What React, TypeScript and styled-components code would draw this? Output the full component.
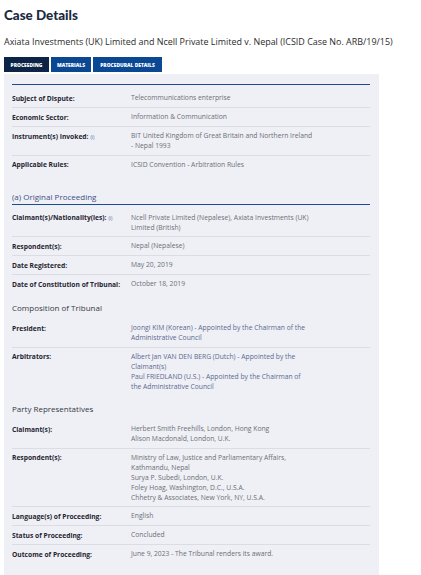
import React from "react";
import styled, { createGlobalStyle } from "styled-components";

const Global = createGlobalStyle`
  html, body { margin: 0; padding: 0; background: #ffffff; }
  body { font-family: "Open Sans", "Noto Sans", sans-serif; }
`;

const Page = styled.div`
  width: 421px;
  padding: 7px 0 0 4px;
  box-sizing: border-box;
`;

const Title = styled.h1`
  margin: 0;
  font-family: "Lato", "Open Sans", sans-serif;
  font-weight: 900;
  font-size: 13.4px;
  line-height: 16px;
  color: #1b2a3f;
`;

const Subtitle = styled.div`
  margin-top: 13px;
  font-size: 8.95px;
  line-height: 12px;
  color: #2b2b2b;
  white-space: nowrap;
`;

const Tabs = styled.div`
  display: flex;
  gap: 2px;
  margin-top: 9px;
`;

const Tab = styled.div<{ $active?: boolean; $w: number }>`
  width: ${(p) => p.$w}px;
  height: 15px;
  display: flex;
  align-items: center;
  justify-content: center;
  background: ${(p) => (p.$active ? "#0c2546" : "#0b4893")};
  color: #ffffff;
  font-size: 4.9px;
  font-weight: 800;
  text-transform: uppercase;
  white-space: nowrap;
`;

const Panel = styled.div`
  margin-top: 2px;
  width: 375px;
  background: #eff0f5;
  padding: 10px 9px 13px 8px;
  box-sizing: border-box;
`;

const Rule = styled.div`
  border-top: 1px solid #1d4b8f;
  margin-bottom: 4px;
`;

const SectionTitle = styled.div<{ $blue?: boolean; $top: number }>`
  margin-top: ${(p) => p.$top}px;
  font-size: 8px;
  line-height: 11px;
  color: ${(p) => (p.$blue ? "#3d4f84" : "#333a45")};
  padding-bottom: ${(p) => (p.$blue ? 2 : 0)}px;
`;

const Table = styled.div<{ $gap?: number }>`
  margin-top: ${(p) => p.$gap ?? 0}px;
`;

const Row = styled.div<{ $last?: boolean }>`
  display: grid;
  grid-template-columns: 119px 1fr;
  padding: 3.5px 0;
  border-bottom: ${(p) => (p.$last ? "none" : "1px solid #dcdde4")};
`;

const Label = styled.div`
  font-size: 6.7px;
  line-height: 11px;
  font-weight: 700;
  color: #1f2530;
  white-space: nowrap;
`;

const Info = styled.span`
  font-size: 4.5px;
  font-weight: 400;
  color: #3b5a9a;
  margin-left: 2px;
`;

const Value = styled.div<{ $link?: boolean }>`
  font-size: 6.75px;
  line-height: 10px;
  padding-top: 0.5px;
  color: ${(p) => (p.$link ? "#5b6890" : "#6c6e76")};
`;

const Line = styled.div`
  white-space: nowrap;
`;

type RowData = { label: string; info?: boolean; lines: string[]; link?: boolean };

const group1: RowData[] = [
  { label: "Subject of Dispute:", lines: ["Telecommunications enterprise"] },
  { label: "Economic Sector:", lines: ["Information & Communication"] },
  {
    label: "Instrument(s) Invoked:",
    info: true,
    lines: ["BIT United Kingdom of Great Britain and Northern Ireland", "- Nepal 1993"],
  },
  { label: "Applicable Rules:", lines: ["ICSID Convention - Arbitration Rules"] },
];

const group2: RowData[] = [
  {
    label: "Claimant(s)/Nationality(ies):",
    info: true,
    lines: ["Ncell Private Limited (Nepalese), Axiata Investments (UK)", "Limited (British)"],
  },
  { label: "Respondent(s):", lines: ["Nepal (Nepalese)"] },
  { label: "Date Registered:", lines: ["May 20, 2019"] },
  { label: "Date of Constitution of Tribunal:", lines: ["October 18, 2019"] },
];

const group3: RowData[] = [
  {
    label: "President:",
    link: true,
    lines: ["Joongi KIM (Korean) - Appointed by the Chairman of the", "Administrative Council"],
  },
  {
    label: "Arbitrators:",
    link: true,
    lines: [
      "Albert Jan VAN DEN BERG (Dutch) - Appointed by the",
      "Claimant(s)",
      "Paul FRIEDLAND (U.S.) - Appointed by the Chairman of",
      "the Administrative Council",
    ],
  },
];

const group4: RowData[] = [
  {
    label: "Claimant(s):",
    lines: ["Herbert Smith Freehills, London, Hong Kong", "Alison Macdonald, London, U.K."],
  },
  {
    label: "Respondent(s):",
    lines: [
      "Ministry of Law, Justice and Parliamentary Affairs,",
      "Kathmandu, Nepal",
      "Surya P. Subedi, London, U.K.",
      "Foley Hoag, Washington, D.C., U.S.A.",
      "Chhetry & Associates, New York, NY, U.S.A.",
    ],
  },
  { label: "Language(s) of Proceeding:", lines: ["English"] },
  { label: "Status of Proceeding:", lines: ["Concluded"] },
  { label: "Outcome of Proceeding:", lines: ["June 9, 2023 - The Tribunal renders its award."] },
];

const Rows = ({ rows }: { rows: RowData[] }) => (
  <>
    {rows.map((r, i) => (
      <Row key={r.label} $last={i === rows.length - 1}>
        <Label>
          {r.label}
          {r.info && <Info>(i)</Info>}
        </Label>
        <Value $link={r.link}>
          {r.lines.map((l) => (
            <Line key={l}>{l}</Line>
          ))}
        </Value>
      </Row>
    ))}
  </>
);

export default function App() {
  return (
    <Page>
      <Global />
      <Title>Case Details</Title>
      <Subtitle>
        Axiata Investments (UK) Limited and Ncell Private Limited v. Nepal (ICSID Case No. ARB/19/15)
      </Subtitle>
      <Tabs>
        <Tab $active $w={45}>Proceeding</Tab>
        <Tab $w={40}>Materials</Tab>
        <Tab $w={69}>Procedural Details</Tab>
      </Tabs>
      <Panel>
        <Rule />
        <Table>
          <Rows rows={group1} />
        </Table>
        <SectionTitle $blue $top={17}>(a) Original Proceeding</SectionTitle>
        <Rule />
        <Table>
          <Rows rows={group2} />
        </Table>
        <SectionTitle $top={9}>Composition of Tribunal</SectionTitle>
        <Table $gap={6}>
          <Rows rows={group3} />
        </Table>
        <SectionTitle $top={8}>Party Representatives</SectionTitle>
        <Table $gap={6}>
          <Rows rows={group4} />
        </Table>
      </Panel>
    </Page>
  );
}
